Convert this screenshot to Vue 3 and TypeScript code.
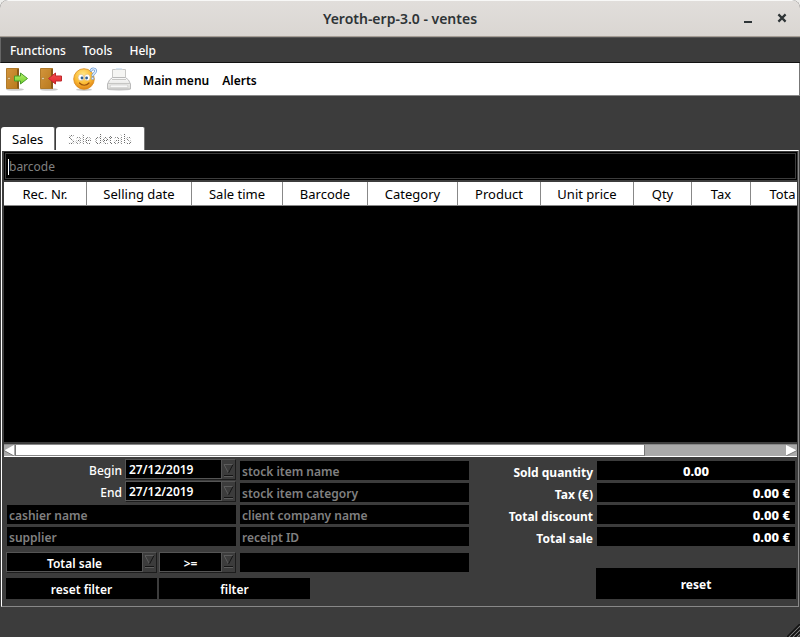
<script setup lang="ts">
import { ref } from 'vue'

interface Column {
  title: string
  width: number
}

interface Total {
  id: string
  label: string
  value: string
  centered?: boolean
}

const menus: string[] = ['Functions', 'Tools', 'Help']

const columns: Column[] = [
  { title: 'Rec. Nr.', width: 83 },
  { title: 'Selling date', width: 105 },
  { title: 'Sale time', width: 91 },
  { title: 'Barcode', width: 85 },
  { title: 'Category', width: 90 },
  { title: 'Product', width: 83 },
  { title: 'Unit price', width: 93 },
  { title: 'Qty', width: 58 },
  { title: 'Tax', width: 59 },
  { title: 'Tota', width: 64 },
]

const totals: Total[] = [
  { id: 'quantity', label: 'Sold quantity', value: '0.00', centered: true },
  { id: 'tax', label: 'Tax (€)', value: '0.00 €' },
  { id: 'discount', label: 'Total discount', value: '0.00 €' },
  { id: 'sale', label: 'Total sale', value: '0.00 €' },
]

const today = '27/12/2019'
const beginDate = ref(today)
const endDate = ref(today)
const barcode = ref('')
const cashier = ref('')
const supplier = ref('')
const itemName = ref('')
const itemCategory = ref('')
const company = ref('')
const receipt = ref('')
const amount = ref('')

function resetFilter(): void {
  beginDate.value = today
  endDate.value = today
  for (const field of [cashier, supplier, itemName, itemCategory, company, receipt, amount]) {
    field.value = ''
  }
}

function resetAll(): void {
  barcode.value = ''
  resetFilter()
}
</script>

<template>
  <div class="window">
    <header class="titlebar">
      <h1>Yeroth-erp-3.0 - ventes</h1>
      <div class="window-buttons">
        <button type="button" aria-label="Minimize">
          <svg width="12" height="12" viewBox="0 0 12 12"><path d="M2 8h8v2H2z" fill="#2e3436" /></svg>
        </button>
        <button type="button" aria-label="Close">
          <svg width="12" height="12" viewBox="0 0 12 12"><path d="M2.400 1.400l7.200 7.200M9.600 1.400l-7.200 7.200" stroke="#2e3436" stroke-width="2.200" /></svg>
        </button>
      </div>
    </header>

    <nav class="menubar">
      <button v-for="menu in menus" :key="menu" type="button">{{ menu }}</button>
    </nav>

    <div class="toolbar">
      <button type="button" class="tool" aria-label="Exit">
        <svg width="24" height="24" viewBox="0 0 24 24">
          <defs>
            <linearGradient id="wood" x1="0" y1="0" x2="1" y2="1">
              <stop offset="0" stop-color="#d3953c" /><stop offset="1" stop-color="#b8781c" />
            </linearGradient>
            <linearGradient id="green" x1="0" y1="0" x2="0" y2="1">
              <stop offset="0" stop-color="#b6ef6c" /><stop offset="1" stop-color="#6fd02c" />
            </linearGradient>
          </defs>
          <ellipse cx="10" cy="22.500" rx="9" ry="1.300" fill="#000" opacity=".2" />
          <path d="M1.500 1.500h12v20h-12z" fill="url(#wood)" stroke="#b07a2a" />
          <path d="M12 2.500l2-1v20.500l-2-1z" fill="#8a5a17" />
          <circle cx="4" cy="11.500" r="1.200" fill="#f4dcae" stroke="#8f6425" stroke-width=".5" />
          <path d="M9.500 9h6V6l7 5.500-7 5.500v-3h-6z" fill="url(#green)" stroke="#4a9c2b" />
        </svg>
      </button>
      <button type="button" class="tool" aria-label="Log out">
        <svg width="24" height="24" viewBox="0 0 24 24">
          <defs>
            <linearGradient id="red" x1="0" y1="0" x2="0" y2="1">
              <stop offset="0" stop-color="#f5504e" /><stop offset="1" stop-color="#e0262c" />
            </linearGradient>
          </defs>
          <ellipse cx="10" cy="22.500" rx="9" ry="1.300" fill="#000" opacity=".2" />
          <path d="M1.500 1.500h12v20h-12z" fill="url(#wood)" stroke="#b07a2a" />
          <path d="M12 2.500l2-1v20.500l-2-1z" fill="#8a5a17" />
          <circle cx="4" cy="11.500" r="1.200" fill="#f4dcae" stroke="#8f6425" stroke-width=".5" />
          <path d="M22.500 9h-6V6l-7 5.500 7 5.500v-3h6z" fill="url(#red)" stroke="#c02a2e" />
        </svg>
      </button>
      <button type="button" class="tool" aria-label="Help">
        <svg width="24" height="24" viewBox="0 0 24 24">
          <defs>
            <radialGradient id="face" cx=".45" cy=".3" r=".75">
              <stop offset="0" stop-color="#ffe98a" /><stop offset=".55" stop-color="#fbbb35" /><stop offset="1" stop-color="#dc7b10" />
            </radialGradient>
          </defs>
          <ellipse cx="11" cy="22.700" rx="8" ry="1.200" fill="#000" opacity=".2" />
          <circle cx="11" cy="12" r="10.300" fill="url(#face)" stroke="#d98c1c" stroke-width=".8" />
          <ellipse cx="8" cy="10.500" rx="2.900" ry="3.300" fill="#fff" stroke="#d9a95a" stroke-width=".5" />
          <ellipse cx="14.200" cy="10.500" rx="2.900" ry="3.300" fill="#fff" stroke="#d9a95a" stroke-width=".5" />
          <circle cx="9" cy="11" r="1.400" fill="#2d5f92" />
          <circle cx="13.600" cy="11" r="1.400" fill="#2d5f92" />
          <path d="M6.500 16c2.500 3 7 3 9.500 0" fill="none" stroke="#9a520d" stroke-width="1.200" stroke-linecap="round" />
          <path d="M18 3.500c1-2.400 4.700-2 4.700.6 0 2-2.700 2.200-3 4.400" fill="none" stroke="#6b9bd4" stroke-width="2.600" stroke-linecap="round" />
          <path d="M18 3.500c1-2.400 4.700-2 4.700.6 0 2-2.700 2.200-3 4.400" fill="none" stroke="#e4f0ff" stroke-width="1.200" stroke-linecap="round" />
          <circle cx="19.600" cy="11.400" r="1.200" fill="#e4f0ff" stroke="#6b9bd4" stroke-width=".7" />
        </svg>
      </button>
      <button type="button" class="tool" aria-label="Print">
        <svg width="24" height="24" viewBox="0 0 24 24">
          <defs>
            <linearGradient id="case" x1="0" y1="0" x2="0" y2="1">
              <stop offset="0" stop-color="#fafafa" /><stop offset="1" stop-color="#dcdcd9" />
            </linearGradient>
          </defs>
          <ellipse cx="12" cy="22.500" rx="11.500" ry="1.200" fill="#000" opacity=".18" />
          <path d="M5.500 12V2.500h13V12z" fill="#f5f5f3" stroke="#c8c8c6" />
          <path d="M8 2.500l1.500-1.500h5L16 2.500z" fill="#d9e7f5" />
          <path d="M2.500 13l3-2.500h13l3 2.500 2 4v5H.5v-5z" fill="url(#case)" stroke="#bababa" />
          <path d="M5 12.500h14M1 16.500h22" stroke="#c6c6c4" />
          <path d="M3.500 18h17l.5 2.500H3z" fill="#f8f8f7" stroke="#cfcfcd" stroke-width=".7" />
        </svg>
      </button>
      <button type="button" class="action">Main menu</button>
      <button type="button" class="action">Alerts</button>
    </div>

    <div class="tabs" role="tablist">
      <button type="button" role="tab" aria-selected="true" class="tab">Sales</button>
      <button type="button" role="tab" aria-selected="false" class="tab" disabled><span>Sale details</span></button>
    </div>

    <main class="panel">
      <div class="barcode">
        <input v-model="barcode" type="text" placeholder="barcode" aria-label="barcode" />
        <span class="caret"></span>
      </div>

      <div class="grid-view">
        <table>
          <colgroup>
            <col v-for="column in columns" :key="column.title" :style="{ width: column.width + 'px' }" />
          </colgroup>
          <thead>
            <tr>
              <th v-for="column in columns" :key="column.title" scope="col">{{ column.title }}</th>
            </tr>
          </thead>
        </table>
      </div>

      <div class="scrollbar">
        <svg width="11" height="11" viewBox="0 0 11 11">
          <path d="M0 0h11v11H0z" fill="#a9a9a9" /><path d="M10 0v11L0 5.500z" fill="#fff" /><path d="M0 5.500L10 11" stroke="#777" />
        </svg>
        <div class="track"><div class="thumb"></div></div>
        <svg width="11" height="11" viewBox="0 0 11 11">
          <path d="M0 0h11v11H0z" fill="#a9a9a9" /><path d="M0 0v11L11 5.500z" fill="#fff" /><path d="M0 11L11 5.500" stroke="#777" />
        </svg>
      </div>

      <div class="bottom">
        <form class="filters" @submit.prevent>
          <div class="fields">
            <div class="column people">
              <div class="dates">
                <div class="date">
                  <label for="begin">Begin</label>
                  <div class="combo">
                    <input id="begin" v-model="beginDate" type="text" />
                    <button type="button" class="drop" aria-label="Choose begin date">
                      <svg width="11" height="16" viewBox="0 0 11 16"><path d="M10 2.500H1L5.500 11" fill="none" stroke="#5c5c5c" /><path d="M10 2.500L5.500 11" stroke="#151515" /><path d="M1 13.500h9" stroke="#151515" /><path d="M1 14.500h9" stroke="#5c5c5c" /></svg>
                    </button>
                  </div>
                </div>
                <div class="date">
                  <label for="end">End</label>
                  <div class="combo">
                    <input id="end" v-model="endDate" type="text" />
                    <button type="button" class="drop" aria-label="Choose end date">
                      <svg width="11" height="16" viewBox="0 0 11 16"><path d="M10 2.500H1L5.500 11" fill="none" stroke="#5c5c5c" /><path d="M10 2.500L5.500 11" stroke="#151515" /><path d="M1 13.500h9" stroke="#151515" /><path d="M1 14.500h9" stroke="#5c5c5c" /></svg>
                    </button>
                  </div>
                </div>
              </div>
              <input v-model="cashier" class="field" type="text" placeholder="cashier name" aria-label="cashier name" />
              <input v-model="supplier" class="field" type="text" placeholder="supplier" aria-label="supplier" />
            </div>
            <div class="column items">
              <input v-model="itemName" class="field" type="text" placeholder="stock item name" aria-label="stock item name" />
              <input v-model="itemCategory" class="field" type="text" placeholder="stock item category" aria-label="stock item category" />
              <input v-model="company" class="field" type="text" placeholder="client company name" aria-label="client company name" />
              <input v-model="receipt" class="field" type="text" placeholder="receipt ID" aria-label="receipt ID" />
            </div>
          </div>

          <div class="condition">
            <div class="combo wide">
              <select aria-label="Compared total"><option>Total sale</option></select>
              <span class="drop">
                <svg width="11" height="16" viewBox="0 0 11 16"><path d="M10 2.500H1L5.500 11" fill="none" stroke="#5c5c5c" /><path d="M10 2.500L5.500 11" stroke="#151515" /><path d="M1 13.500h9" stroke="#151515" /><path d="M1 14.500h9" stroke="#5c5c5c" /></svg>
              </span>
            </div>
            <div class="combo narrow">
              <select aria-label="Comparison"><option>&gt;=</option></select>
              <span class="drop">
                <svg width="11" height="16" viewBox="0 0 11 16"><path d="M10 2.500H1L5.500 11" fill="none" stroke="#5c5c5c" /><path d="M10 2.500L5.500 11" stroke="#151515" /><path d="M1 13.500h9" stroke="#151515" /><path d="M1 14.500h9" stroke="#5c5c5c" /></svg>
              </span>
            </div>
            <input v-model="amount" class="field amount" type="text" aria-label="Amount" />
          </div>

          <div class="filter-buttons">
            <button type="button" class="push" @click="resetFilter">reset filter</button>
            <button type="submit" class="push">filter</button>
          </div>
        </form>

        <section class="summary">
          <div v-for="total in totals" :key="total.id" class="total">
            <label :for="total.id">{{ total.label }}</label>
            <input :id="total.id" class="field value" :class="{ centered: total.centered }" type="text" :value="total.value" readonly />
          </div>
          <button type="button" class="push reset" @click="resetAll">reset</button>
        </section>
      </div>
    </main>

    <footer class="status">
      <svg width="13" height="13" viewBox="0 0 13 13">
        <path d="M0 13L13 0M4 13l9-9M8 13l5-5" stroke="#111" stroke-width="1.500" />
        <path d="M2 13L13 2M6 13l7-7M10 13l3-3" stroke="#777" />
      </svg>
    </footer>
  </div>
</template>

<style>
body {
  margin: 0;
  background: #eeeeec;
}
</style>

<style scoped>
* {
  box-sizing: border-box;
}

.window {
  display: flex;
  flex-direction: column;
  min-height: 100vh;
  overflow: hidden;
  border-radius: 8px 8px 0 0;
  background: #3c3c3c;
  color: #fff;
  font: 400 13px/18px "Noto Sans", sans-serif;
}

button,
input,
select {
  margin: 0;
  padding: 0;
  border: 0;
  border-radius: 0;
  outline: 0;
  background: none;
  color: inherit;
  font: inherit;
}

svg {
  display: block;
}

.titlebar {
  display: grid;
  grid-template-columns: 1fr auto 1fr;
  align-items: center;
  height: 37px;
  border-top: 1px solid #f8f8f7;
  border-bottom: 1px solid #a69e95;
  background: linear-gradient(#e1dedb, #dad6d2);
  color: #2e3436;
}

.titlebar h1 {
  grid-column: 2;
  margin: 0;
  font-size: 14px;
  font-weight: 600;
}

.window-buttons {
  display: flex;
  justify-content: flex-end;
  gap: 22px;
  padding-right: 12px;
}

.menubar {
  display: flex;
  gap: 17px;
  height: 26px;
  padding: 2px 9px 0;
  border-top: 1px solid #555;
  border-bottom: 1px solid #111;
  border-left: 1px solid #666;
  font-size: 12px;
  font-weight: 500;
}

.toolbar {
  display: flex;
  align-items: center;
  height: 33px;
  padding: 0 5px;
  border-right: 1px solid #777;
  border-bottom: 1px solid #888;
  background: #fff;
  color: #000;
  font-size: 12px;
  font-weight: 600;
}

.tool {
  margin-right: 10px;
}

.action {
  margin: 4px 11px 0 2px;
}

.tabs {
  display: flex;
  align-items: flex-end;
  gap: 1px;
  height: 54px;
  padding-left: 1px;
}

.tab {
  height: 23px;
  padding: 1px 11px 0;
  border-right: 1px solid #777;
  border-radius: 3px 2px 0 0;
  background: #fff;
  color: #000;
}

.tab:disabled {
  padding: 3px 12px 0;
  font-size: 12px;
}

.tab:disabled span {
  background: repeating-conic-gradient(#666 0 25%, #fff 0 50%) 0 0 / 2px 2px;
  background-clip: text;
  color: transparent;
}

.panel {
  display: flex;
  flex: 1;
  flex-direction: column;
  margin: 0 1px;
  padding: 1px 1px 0;
  border: 1px solid #888;
  border-top-color: #fff;
  border-left-color: #fff;
}

.barcode {
  position: relative;
  height: 28px;
  margin: 0 0 2px 1px;
  padding: 1px;
  background: #000;
}

.barcode input {
  width: 100%;
  height: 26px;
  padding: 0 3px;
  border: 1px solid #3c3c3c;
  font-size: 12px;
}

.caret {
  position: absolute;
  top: 7px;
  left: 4px;
  width: 1px;
  height: 16px;
  background: #fff;
}

.grid-view {
  flex: 1;
  overflow: hidden;
  margin-left: 1px;
  background: #000;
}

table {
  width: 811px;
  border-collapse: separate;
  border-spacing: 0;
  table-layout: fixed;
}

th {
  height: 24px;
  padding: 0;
  border-right: 1px solid #888;
  border-bottom: 1px solid #888;
  background: #fff;
  color: #000;
  font-weight: 400;
  line-height: 18px;
}

.scrollbar {
  display: flex;
  height: 13px;
  margin: 2px 0 0 1px;
  border-top: 1px solid #888;
  border-bottom: 1px solid #fff;
  background: #a9a9a9;
}

.track {
  flex: 1;
}

.thumb {
  width: 81.7%;
  height: 11px;
  border-right: 1px solid #777;
  border-bottom: 1px solid #888;
  border-left: 1px solid #777;
  background: #fff;
}

.bottom {
  display: flex;
  justify-content: space-between;
  padding: 2px 1px 7px 3px;
  font-size: 12px;
  font-weight: 600;
}

.filters {
  width: 463px;
}

.fields {
  display: grid;
  grid-template-columns: 230px 229px;
  gap: 4px;
}

.column {
  display: flex;
  flex-direction: column;
  gap: 3px;
}

.people {
  padding-left: 1px;
}

.items,
.summary {
  padding-top: 2px;
}

.field {
  width: 100%;
  height: 19px;
  padding: 2px 2px 0;
  background: #000;
}

.field::placeholder,
.barcode input::placeholder {
  color: #808080;
  opacity: 1;
}

.dates {
  display: grid;
  gap: 1px;
}

.date {
  display: flex;
  align-items: center;
  justify-content: flex-end;
  gap: 3px;
}

.date label {
  padding-top: 2px;
  font-weight: 500;
}

.date .combo {
  width: 111px;
}

.combo {
  display: flex;
  height: 21px;
  border: 1px solid #555;
  border-right-color: #1c1c1c;
  border-bottom-color: #1c1c1c;
}

.combo input,
.combo select {
  flex: 1;
  min-width: 0;
  padding: 2px 3px 0;
  border-right: 1px solid #555;
  border-bottom: 1px solid #555;
  background: #000;
  color: #fff;
}

.combo select {
  appearance: none;
  text-align: center;
  text-align-last: center;
}

.drop {
  width: 13px;
  padding-left: 1px;
}

.condition {
  display: flex;
  gap: 2px;
  margin-top: 6px;
}

.wide {
  width: 151px;
}

.narrow {
  width: 77px;
}

.condition .field {
  flex: 1;
  width: auto;
  margin: 1px 0 0 2px;
}

.filter-buttons {
  display: flex;
  gap: 2px;
  margin-top: 5px;
}

.push {
  width: 151px;
  height: 21px;
  padding-top: 2px;
  background: #000;
}

.summary {
  display: flex;
  flex-direction: column;
  align-items: flex-end;
  gap: 3px;
  font-weight: 700;
}

.total {
  display: flex;
  gap: 4px;
  height: 19px;
  padding-right: 1px;
  line-height: 24px;
}

.value {
  width: 198px;
  padding: 1px 5px 0;
  font-size: 13px;
  font-weight: 800;
  line-height: 18px;
  text-align: right;
}

.centered {
  text-align: center;
}

.reset {
  width: 200px;
  height: 31px;
  margin-top: auto;
}

.status {
  display: flex;
  align-items: flex-end;
  justify-content: flex-end;
  height: 30px;
}
</style>
